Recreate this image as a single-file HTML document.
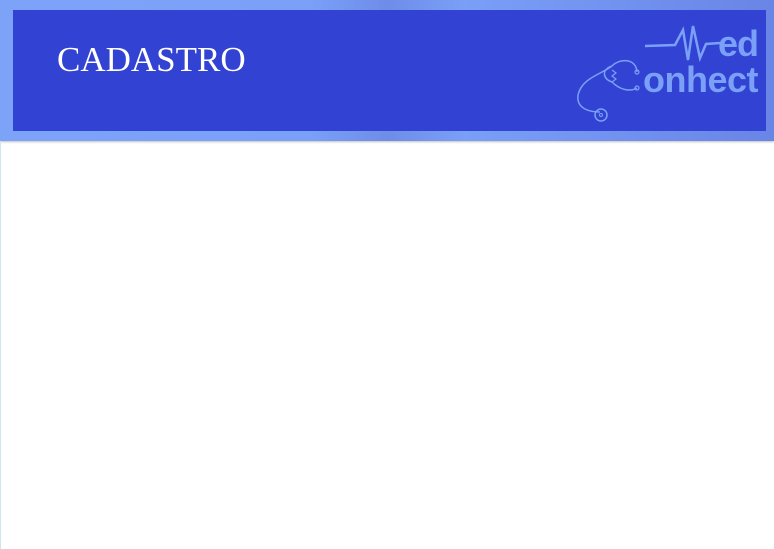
<!DOCTYPE html>
<html><head><style>
body{margin:0;width:774px;height:549px;background:#fff;overflow:hidden;position:relative;font-family:"Liberation Sans",sans-serif}
.hdr{position:absolute;left:0;top:0;width:774px;height:141px;background:linear-gradient(90deg,#7da3f9 0%,#7aa0f8 40%,#6e8de8 50%,#7a9ff7 60%,#6985e6 100%);box-shadow:0 1px 2px rgba(0,0,0,.25)}
.in{position:absolute;left:13px;top:10px;width:753px;height:121px;background:#3242d2}
.t{position:absolute;left:57px;top:40px;font-family:"Liberation Serif",serif;font-size:35px;color:#fff;letter-spacing:0}
.lg{position:absolute;font-weight:bold;color:#7ba0f8;font-size:36px;line-height:1}
.lb{position:absolute;left:0;top:142px;width:1px;height:407px;background:#cfe6ea}
</style></head><body>
<div class="hdr"><div class="in"></div></div>
<div class="t">CADASTRO</div>
<div class="lg" style="left:718px;top:26px;letter-spacing:-1px">ed</div>
<div class="lg" style="left:643px;top:62px;letter-spacing:-0.5px">onhect</div>
<svg style="position:absolute;left:570px;top:20px" width="160" height="110" viewBox="570 20 160 110" fill="none" stroke="#7ba0f8">
<path d="M645 46 L675 45 L683 30 L688 60 L693 26 L700 58 L706 44 L720 43" stroke-width="2.5"/>
<path d="M612 66 C620 58 636 58 637 72 M612 66 C600 70 604 80 612 82 C620 90 630 92 637 88" stroke-width="1.5"/>
<path d="M612 66 C600 75 582 78 578 95 C576 110 592 112 600 112" stroke-width="1.5"/>
<circle cx="601" cy="115" r="6" stroke-width="1.5"/><circle cx="601" cy="115" r="1.5" stroke-width="1"/>
<circle cx="637" cy="72" r="2" stroke-width="1.2"/><circle cx="637" cy="88" r="2" stroke-width="1.2"/>
<path d="M612 70 l4 3 -4 3 4 3 -4 3" stroke-width="1.2"/>
</svg>
<div class="lb"></div>
</body></html>
